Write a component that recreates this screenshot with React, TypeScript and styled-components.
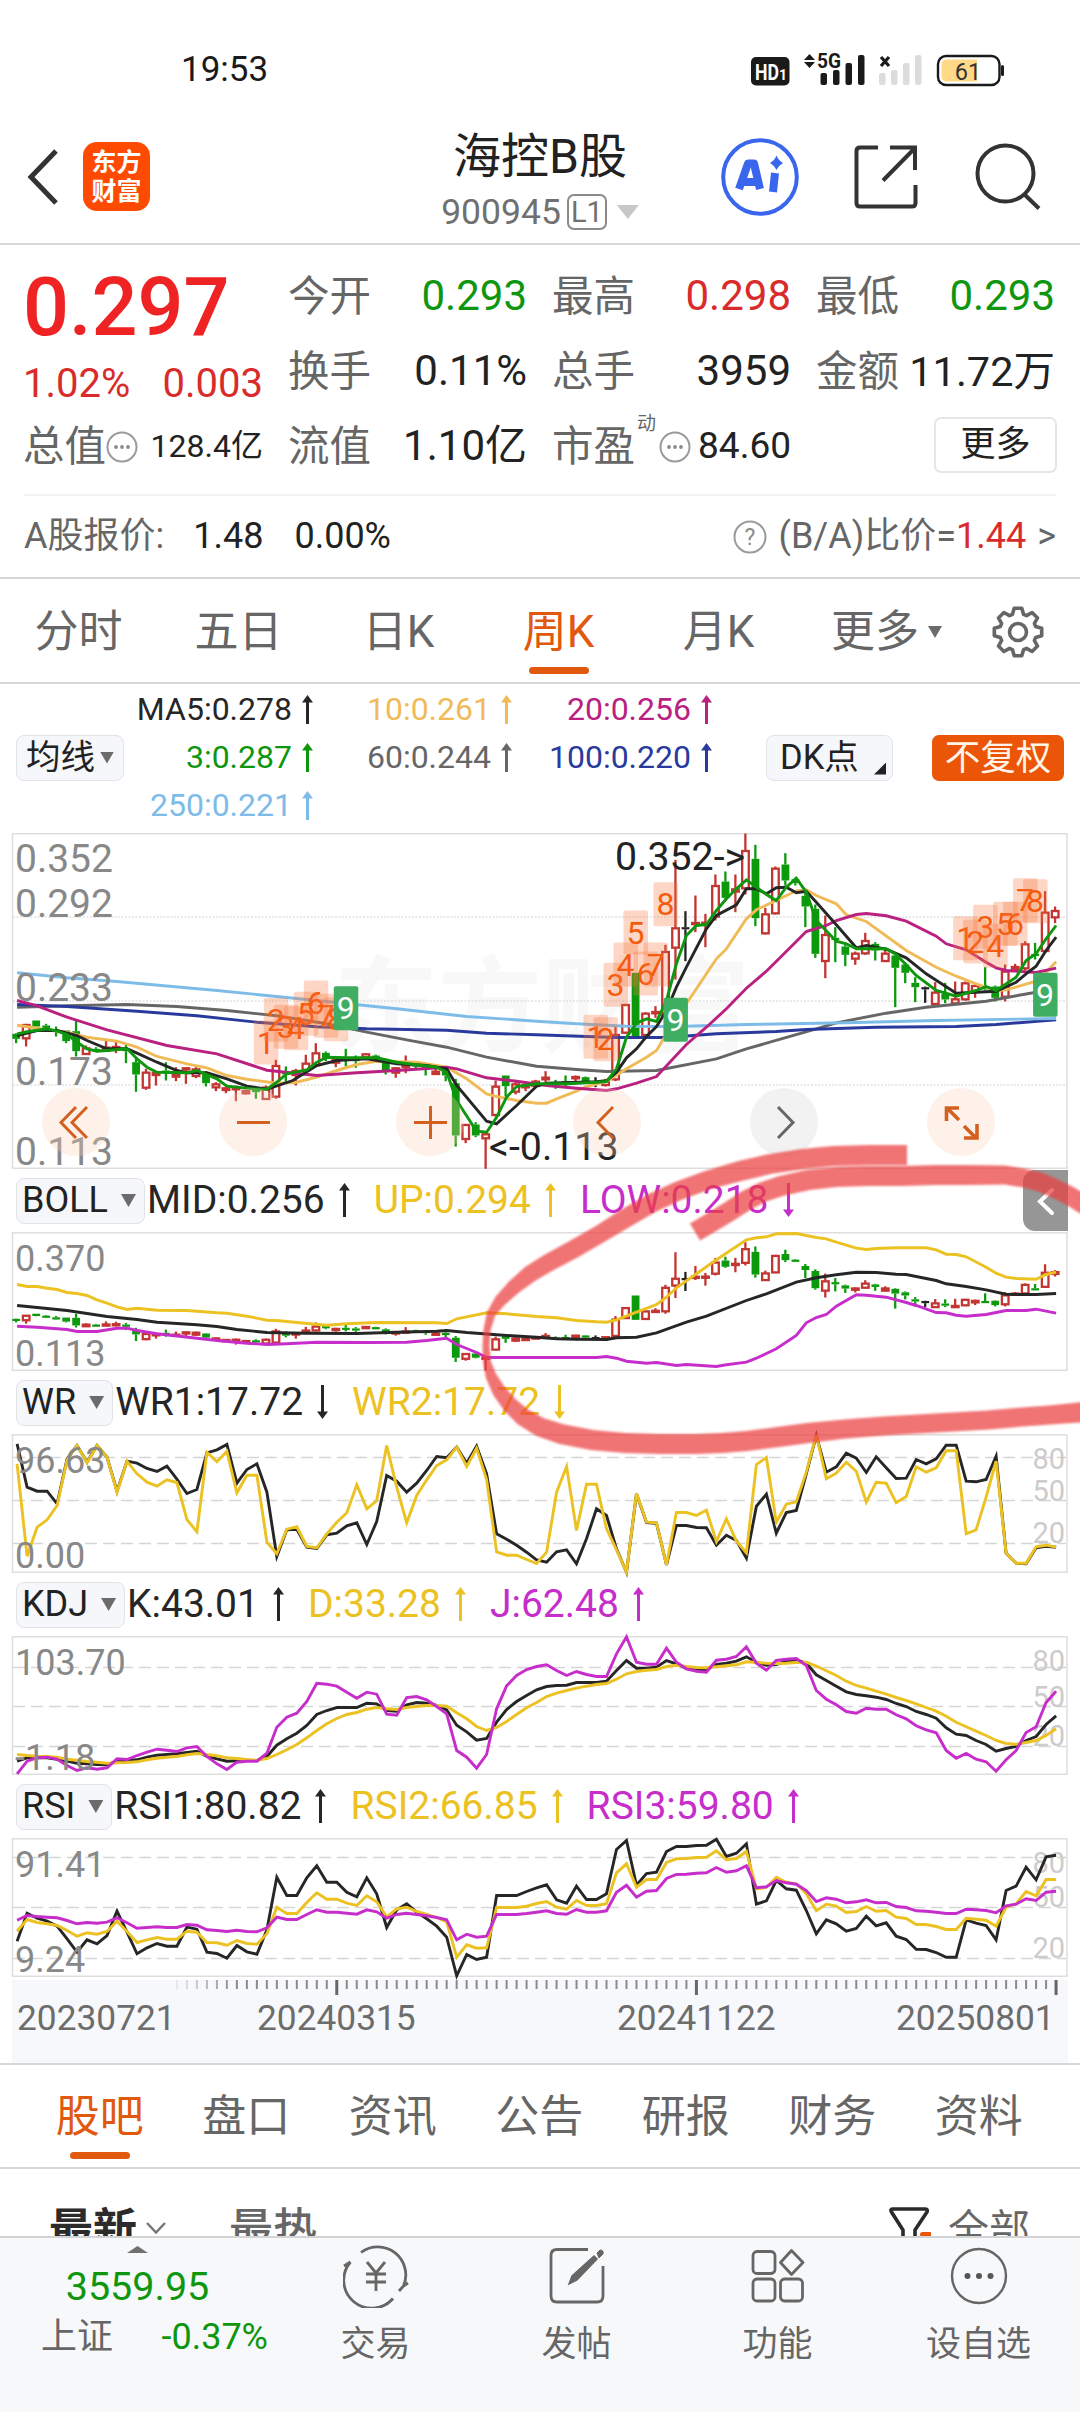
import React from 'react'
import styled, { createGlobalStyle } from 'styled-components'

const GlobalStyle = createGlobalStyle`
  * {
    box-sizing: border-box;
  }
  body {
    margin: 0;
    background: #ffffff;
    font-family: Roboto, 'Noto Sans CJK SC', sans-serif;
    line-height: 1.2;
    color: #222222;
  }
`

const colors = {
  black: '#262626',
  grey: '#666666',
  red: '#d92b2b',
  green: '#0f960f',
  orange: '#e1580f',
  yellow: '#ecc122',
  magenta: '#c62dcb',
  line: '#d6d7d9',
}

const Page = styled.div`
  position: relative;
  width: 1080px;
  height: 2412px;
  overflow: hidden;
  background: #ffffff;
`

const StatusBar = styled.div`
  height: 112px;
  padding: 27px 76px 0 181px;
  display: flex;
  align-items: center;
  justify-content: space-between;
  font-size: 35px;
  color: #1a1a1a;
`

const Header = styled.header`
  height: 133px;
  border-bottom: 2px solid ${colors.line};
  display: grid;
  grid-template-columns: 400px 280px 1fr;
`

const HeaderLeft = styled.div`
  display: flex;
  align-items: center;
  padding: 0 0 2px 26px;
  gap: 24px;
`

const Logo = styled.div`
  width: 67px;
  height: 69px;
  border-radius: 14px;
  background: #ff4a02;
  color: #ffffff;
  font-size: 25px;
  font-weight: 700;
  line-height: 29px;
  padding-top: 6px;
  text-align: center;
`

const HeaderTitle = styled.div`
  display: flex;
  flex-direction: column;
  align-items: center;
  padding-top: 20px;
  gap: 12px;
`

const Name = styled.div`
  font-size: 48px;
  line-height: 50px;
  color: #222222;
`

const Code = styled.div`
  display: flex;
  align-items: center;
  font-size: 35.5px;
  line-height: 36px;
  color: #707070;
`

const Level = styled.span`
  width: 40px;
  height: 36px;
  margin: 0 10px 0 6px;
  border: 2px solid #8a8a8a;
  border-radius: 7px;
  font-size: 29px;
  line-height: 33px;
  text-align: center;
`

const HeaderRight = styled.div`
  display: flex;
  align-items: center;
  padding: 0 0 2px 41px;
`

const AiBadge = styled.div`
  width: 78px;
  height: 78px;
  margin-right: 55px;
`

const ShareBox = styled.div`
  width: 64px;
  height: 64px;
  margin-right: 57px;
`

const Triangle = styled.span<{ $w: number; $h: number; $color?: string; $up?: boolean }>`
  flex: none;
  width: ${(p) => p.$w}px;
  height: ${(p) => p.$h}px;
  background: ${(p) => p.$color || '#6b6b6b'};
  clip-path: ${(p) => (p.$up ? 'polygon(50% 0, 100% 100%, 0 100%)' : 'polygon(0 0, 100% 0, 50% 100%)')};
`

const Quote = styled.section`
  height: 334px;
  padding-top: 14px;
  border-bottom: 2px solid ${colors.line};
`

const QuoteGrid = styled.div`
  display: grid;
  grid-template-columns: 240px 239px 239px 239px;
  grid-template-rows: 75px 75px 75px;
  column-gap: 25px;
  padding-left: 23px;
`

const PriceCell = styled.div`
  grid-row: span 2;
  padding-top: 4px;
  color: ${colors.red};
`

const Price = styled.div`
  font-size: 81px;
  font-weight: 500;
  line-height: 90px;
  color: #ef2323;
`

const Change = styled.div`
  display: flex;
  justify-content: space-between;
  font-size: 40px;
  line-height: 61px;
`

const Cell = styled.div`
  display: flex;
  align-items: center;
  white-space: nowrap;
`

const CellLabel = styled.span`
  font-size: 41.5px;
  color: ${colors.grey};
`

const CellValue = styled.span<{ $color?: string; $size?: number }>`
  margin-left: auto;
  font-size: ${(p) => p.$size || 42}px;
  color: ${(p) => p.$color || '#222222'};
`

const Sup = styled.span`
  align-self: flex-start;
  margin: 4px 3px 0 2px;
  font-size: 19px;
  color: ${colors.grey};
`

const MoreButton = styled.button`
  width: 123px;
  height: 56px;
  margin: -4px -2px 0 auto;
  padding: 0;
  border: 2px solid #e6e6e8;
  border-radius: 7px;
  background: #ffffff;
  font-family: inherit;
  font-size: 35px;
  line-height: 50px;
  color: #222222;
`

const AShareRow = styled.div`
  display: flex;
  align-items: center;
  height: 83px;
  margin: 10px 24px 0;
  border-top: 2px solid #f3f3f3;
  font-size: 36px;
  white-space: pre;
`

const Muted = styled.span`
  color: ${colors.grey};
`

const Num = styled.span<{ $ml?: number }>`
  margin-left: ${(p) => p.$ml || 0}px;
`

const Ratio = styled.div`
  display: flex;
  align-items: center;
  margin-left: auto;
`

const KTabs = styled.nav`
  display: grid;
  grid-template-columns: repeat(5, 160px) 176px 86px;
  height: 105px;
  border-bottom: 2px solid ${colors.line};
`

const Tab = styled.div<{ $active?: boolean }>`
  position: relative;
  display: flex;
  align-items: center;
  justify-content: center;
  gap: 9px;
  padding: 3px 3px 0 0;
  font-size: 44px;
  color: ${(p) => (p.$active ? colors.orange : colors.grey)};
  &::after {
    content: '';
    display: ${(p) => (p.$active ? 'block' : 'none')};
    position: absolute;
    bottom: 8px;
    left: 50%;
    width: 60px;
    height: 7px;
    margin-left: -31px;
    border-radius: 4px;
    background: ${colors.orange};
  }
`

const AverageBar = styled.div`
  display: flex;
  align-items: center;
  height: 149px;
  padding: 0 16px 2px;
`

const Pill = styled.div<{ $w?: number; $gap?: number; $size?: number }>`
  position: relative;
  flex: none;
  display: flex;
  align-items: center;
  width: ${(p) => (p.$w ? `${p.$w}px` : 'auto')};
  height: 46px;
  padding: 0 8px 0 ${(p) => (p.$w ? 9 : 5)}px;
  gap: ${(p) => p.$gap || 5}px;
  border: 1.5px solid #e2e3e7;
  border-radius: 8px;
  background: #f6f7fa;
  font-size: ${(p) => p.$size || 34.5}px;
  white-space: nowrap;
`

const Corner = styled.span`
  position: absolute;
  right: 6px;
  bottom: 5px;
  width: 12px;
  height: 12px;
  background: #222222;
  clip-path: polygon(100% 0, 100% 100%, 0 100%);
`

const AverageGrid = styled.div`
  display: grid;
  grid-template-columns: 185px 199px 200px;
  grid-auto-rows: 48px;
  margin: 0 54px 0 4px;
`

const Average = styled.div<{ $color: string }>`
  display: flex;
  align-items: center;
  justify-content: flex-end;
  gap: 10px;
  font-size: 32px;
  color: ${(p) => p.$color};
`

const Adjust = styled.div`
  width: 132px;
  height: 46px;
  margin-left: 39px;
  border-radius: 7px;
  background: #ea5507;
  color: #fff4e8;
  font-size: 35.5px;
  line-height: 46px;
  text-align: center;
`

const MainChart = styled.div`
  position: relative;
  height: 336px;
`

const Plot = styled.svg`
  display: block;
  overflow: visible;
  font-family: Roboto, 'Noto Sans CJK SC', sans-serif;
`

const Controls = styled.div`
  position: absolute;
  left: 42px;
  top: 255px;
  display: flex;
  gap: 109px;
`

const Control = styled.div<{ $grey?: boolean }>`
  width: 68px;
  height: 68px;
  border-radius: 50%;
  background: ${(p) => (p.$grey ? 'rgba(225, 225, 225, 0.42)' : 'rgba(252, 208, 182, 0.3)')};
`

const IndicatorHead = styled.div`
  position: relative;
  display: flex;
  align-items: center;
  height: 63px;
  padding-left: 16px;
`

const Readout = styled.div<{ $color: string }>`
  display: flex;
  align-items: center;
  gap: 14px;
  margin: 0 22px 0 2px;
  font-size: 39px;
  color: ${(p) => p.$color};
`

const SideHandle = styled.div`
  position: absolute;
  right: 12px;
  top: 1px;
  width: 45px;
  height: 61px;
  border-radius: 12px 0 0 12px;
  background: #969696;
`

const DateAxis = styled.div`
  height: 83px;
  margin: 3px 12px 0;
  background: #f7f8fb;
`

const Dates = styled.div`
  display: grid;
  grid-template-columns: 240px 360px 279px auto;
  padding: 1px 0 0 5px;
  font-size: 35.3px;
  line-height: 42px;
  color: #6c6c6c;
`

const SectionTabs = styled.nav`
  display: grid;
  grid-template-columns: repeat(7, 146.5px);
  height: 106px;
  padding-left: 28px;
  border-top: 2px solid ${colors.line};
  border-bottom: 2px solid ${colors.line};
`

const Feed = styled.div`
  display: flex;
  height: 67px;
  padding: 31px 50px 0 49px;
  overflow: hidden;
  font-size: 44px;
  line-height: 60px;
  color: ${colors.grey};
`

const FeedSort = styled.span<{ $active?: boolean }>`
  font-weight: ${(p) => (p.$active ? 700 : 500)};
  color: ${(p) => (p.$active ? '#2b2b2b' : '#666666')};
`

const FeedFilter = styled.div`
  display: flex;
  margin-left: auto;
  gap: 17px;
  font-size: 41px;
`

const Footer = styled.footer`
  display: grid;
  grid-template-columns: 275px repeat(4, 201px);
  height: 176px;
  border-top: 2px solid #d3d4d6;
  background: #f7f8fa;
`

const IndexCell = styled.div`
  display: flex;
  flex-direction: column;
  align-items: center;
  padding-top: 8px;
  color: ${colors.green};
`

const IndexValue = styled.div`
  margin-top: 14px;
  font-size: 39.5px;
  line-height: 40px;
`

const IndexRow = styled.div`
  display: flex;
  align-self: stretch;
  justify-content: space-between;
  align-items: center;
  margin-top: 9px;
  padding: 0 7px 0 41px;
  font-size: 36px;
  line-height: 42px;
`

const FootItem = styled.div`
  display: flex;
  flex-direction: column;
  align-items: center;
  padding-top: 6px;
  font-size: 35px;
  line-height: 40px;
  color: ${colors.grey};
  svg {
    margin-bottom: 17px;
  }
`

const Marker = styled.svg`
  position: absolute;
  left: 0;
  top: 1120px;
  pointer-events: none;
`

// ---- chart data: one entry per week, vertical units are a third of a pixel ----

const WEEKS = 105
const weekX = (i: number) => 17.1 + i * 9.99

type Point = [number, number]

const full = (s: string): Point[] => s.trim().split(/\s+/).map((v, i) => [i, Number(v)])
const sparse = (s: string): Point[] =>
  s.trim().split(/\s+/).map((pair) => pair.split(':').map(Number) as Point)

const toPoints = (pts: Point[], base: number) =>
  pts.map(([i, v]) => `${weekX(i).toFixed(1)},${((v - base) / 3 + 0.5).toFixed(1)}`).join(' ')

// colour, high, body top, body bottom, low
const candles = `
g 638 640 655 668|r 610 612 655 678|g 600 600 618 620|g 610 615 630 632|g 618 628 632 648|g 630 630 662 668|g 600 632 692 708
r 675 682 702 703|g 680 685 692 695|r 660 680 692 693|r 662 678 688 698|g 672 685 692 728|g 710 725 762 814|r 745 755 803 808
r 755 756 765 795|g 725 750 756 780|r 740 760 770 782|r 740 742 748 790|r 740 745 768 773|g 752 755 788 798|r 785 790 802 812
r 798 802 810 818|r 795 800 808 842|r 808 810 820 822|g 800 808 815 835|r 795 800 837 838|r 718 735 830 835|g 738 755 760 785
r 745 750 765 795|r 703 728 750 755|r 668 697 735 738|g 693 697 712 722|r 710 715 728 740|g 685 710 715 738|g 705 715 722 742
r 698 700 712 712|g 702 705 715 718|g 715 722 750 762|r 740 742 758 772|r 705 735 740 758|g 725 730 738 745|g 730 735 745 765
r 740 752 762 763|g 745 750 765 782|g 775 788 945 978|r 910 912 957 968|g 905 912 945 950|r 935 940 955 1045|r 780 797 885 888
g 765 765 797 828|r 785 790 815 822|r 785 793 802 812|r 778 782 798 800|r 752 770 778 785|g 778 785 792 805|g 765 782 790 798
r 765 768 775 792|g 768 770 785 790|k 770 782 786 800|r 775 780 795 798|r 618 642 778 782|r 550 552 638 640|g 457 457 648 648
r 575 578 645 648|r 557 573 580 592|r 373 393 585 600|r 118 322 383 477|k 272 320 324 422|r 225 306 312 335|r 280 305 312 380
r 162 195 290 300|g 153 183 232 240|r 162 205 215 275|r 39 90 205 222|g 73 115 293 317|r 262 280 340 342|r 138 143 280 282
g 98 132 180 195|g 172 176 188 195|g 210 226 258 320|g 252 265 400 412|r 285 342 423 473|g 320 352 356 425|g 372 378 403 437
r 393 398 416 433|r 337 360 400 403|g 365 370 390 420|r 385 398 423 425|g 400 405 442 560|g 425 432 457 488|g 470 487 500 545
k 498 500 504 547|r 485 515 552 553|g 487 520 537 548|r 483 535 550 551|r 483 487 538 540|r 490 495 515 532|g 440 500 505 510
g 495 498 532 543|r 432 452 530 543|r 430 438 448 452|r 362 370 445 450|g 367 400 405 417|r 212 275 393 395|r 258 270 292 308
`
  .trim()
  .split(/[|\n]/)
  .map((row) => {
    const [kind, ...v] = row.trim().split(' ')
    return { kind, v: v.map(Number) }
  })

const ma: { color: string; pts: Point[] }[] = [
  {
    color: '#666666',
    pts: sparse(
      '0:560 5:556 11:552 16:558 21:570 26:586 31:610 35:635 39:658 43:680 47:710 52:737 56:747 59:753 64:750 70:715 73:685 75:668 80:625 82:607 87:578 91:560 97:542 102:515 104:506',
    ),
  },
  {
    color: '#2a3a9c',
    pts: sparse(
      '0:552 5:558 12:572 18:586 24:605 30:619 35:625 43:629 47:638 52:643 57:648 60:651 65:651 70:640 76:633 79:627 86:620 94:618 98:612 104:598',
    ),
  },
  {
    color: '#7dbce9',
    pts: sparse('0:457 5:472 10:483 20:510 30:540 38:565 45:588 52:602 56:610 61:617 66:618 73:612 83:607 92:600 104:594'),
  },
  {
    color: '#f0bb57',
    pts: sparse(
      '0:614 3:628 5:636 7:650 10:662 12:680 14:708 17:730 19:742 21:765 23:776 26:788 28:785 30:770 32:750 34:732 36:722 40:725 43:740 45:775 47:820 48:828 50:840 52:848 53:848 54:835 56:812 57:798 59:783 61:745 63:710 64:690 64.6:660 67:550 69:460 70:415 71:385 73:295 74:268 76:240 78:211 79:208 80:225 82:250 83:283 85:303 89:390 92:440 94:467 96:490 98:510 99:508 102:482 103:455 104:424',
    ),
  },
  {
    color: '#b9207f',
    pts: sparse(
      '0:540 2:556 5:590 9:628 15:675 20:700 25:749 30:765 34:757 38:750 43:740 44:745 47:772 50:782 53:795 56:803 59:810 60:805 62:788 64:768 67:672 69:620 71:565 73:503 75:452 78:363 79:333 81:315 82:300 84:282 85:279 87:286 89:302 92:347 93:370 95:388 97:425 98:442 99:450 102:456 104:443',
    ),
  },
  {
    color: '#262626',
    pts: sparse(
      '0:645 2:630 4:630 6:645 7:660 9:685 11:685 12:698 14:725 16:750 17:757 19:757 21:775 23:797 25:806 27.6:780 30:735 32:720 35:715 38:730 41:735 43:745 44:795 47:902 48:910 50:855 52:797 53:788 58:784 59:781 60:755 61:712 62:685 63:648 64:618 65:570 66:500 67:440 69:325 70:285 72:253 73:205 74:205 75:220 76:202 77:200 78:217 79:212 80:245 82:313 84:382 85:375 87:386 89:412 91:460 94:518 96:515 98:512 100:485 101:460 102:437 103:390 104:350',
    ),
  },
  {
    color: '#0f960f',
    pts: sparse(
      '0:640 1:634 3:625 4:632 5:642 6:665 7:685 8:692 9:690 11:685 12:715 13:740 14:755 17:757 18:750 20:775 21:797 24:806 25:806 26:785 27:760 29:748 30:725 31:710 33:712 36:712 38:725 42:740 43:755 44:840 46:932 47:935 48:890 49:830 50:798 52:790 55:790 58:785 59:783 60:745 61:650 62:608 63:595 64:603 65:540 66:430 67:345 68:315 69:312 70:270 71:235 72:205 73:178 75:222 76:240 77:200 78:173 79:215 80:300 82:362 83:370 84:385 87:385 88:402 90:465 92:510 94:527 96:510 97:498 98:510 100:470 101:420 102:400 103:355 104:315',
    ),
  },
]

const boll = [
  {
    color: colors.yellow,
    pts: sparse(
      '0:342 1:348 2:348 3:353 4:357 5:366 6:369 7:375 8:388 9:398 10:409 11:417 12:413 14:419 17:420 20:427 21:428 23:437 25:449 26:450 28:456 31:464 33:460 36:456 42:457 43:459 44:445 47:427 49:430 52:438 54:442 56:450 58:454 59:455 60:448 62:425 64:402 65:380 66:352 68:310 70:268 73:208 74:202 75:199 76:190 78:189 80:201 81:205 82:215 84:233 85:237 86:234 88:232 91:232 92:238 93:251 94:252 95:259 97:290 98:308 99:320 100:324 102:326 103:312 104:305',
    ),
  },
  {
    color: colors.black,
    pts: sparse(
      '0:405 5:420 9:438 12:447 14:455 18:463 20:468 22:477 25:486 29:488 34:489 38:485 42:482 43:480 45:486 48:493 52:500 54:505 56:506 59:507 60:502 62:500 64:487 67:455 69:437 73:390 75:370 78:335 80:322 82:313 84:305 86:306 88:311 89:312 92:330 93:340 95:348 97:358 99:371 100:372 102:372 104:369',
    ),
  },
  {
    color: colors.magenta,
    pts: sparse(
      '0:467 2:470 5:477 6:483 8:483 10:473 11:473 12:480 14:490 18:503 20:510 23:518 25:522 27:520 30:515 35:516 39:515 41:510 43:503 44:522 46:546 47:560 48:561 58:561 59:558 60:563 61:572 63:578 64:576 66:585 67:582 70:588 71:583 73:575 74:563 76:535 78:495 79:457 80:441 81:432 82:407 84:373 85:374 87:380 89:396 90:405 92:426 93:427 94:434 95:437 97:432 99:420 101:420 102:416 104:428',
    ),
  },
]

const wr = [
  {
    color: colors.black,
    pts: full(
      '70 200 212 212 250 115 75 125 75 110 212 122 128 144 153 137 176 219 207 97 88 72 188 147 130 215 408 328 326 380 384 343 338 316 307 372 303 165 182 215 188 150 108 112 80 128 77 160 340 356 374 395 418 425 394 388 430 355 265 285 385 455 220 306 308 433 315 315 321 322 374 344 360 413 257 221 338 276 270 160 45 155 139 98 113 156 109 142 174 173 117 130 115 74 74 182 184 177 107 398 428 430 382 377 380',
    ),
  },
  {
    color: colors.yellow,
    pts: full(
      '130 407 320 298 255 118 75 127 75 110 215 122 160 185 197 178 186 297 334 95 124 93 217 164 164 365 400 326 319 378 382 340 305 277 193 265 241 75 200 307 225 178 135 118 80 138 83 177 394 404 404 417 429 395 215 138 330 191 191 325 388 455 218 305 307 433 276 276 285 269 363 295 362 397 132 111 305 251 244 155 43 175 158 125 152 245 185 188 247 228 139 155 142 91 91 340 328 230 122 398 428 428 379 374 380',
    ),
  },
]

const kdj = [
  {
    color: colors.black,
    pts: full(
      '1022 1012 1012 1012 1016 1022 1028 1030 1032 1033 1022 1020 1018 1010 1004 1002 1000 996 992 1008 1015 1022 1021 1020 1020 1008 974 955 938 915 882 870 861 861 861 848 850 870 872 853 846 848 855 868 914 934 959 954 905 867 843 825 808 798 795 794 786 786 786 782 750 720 743 743 740 720 730 744 747 748 732 728 722 709 725 734 732 722 718 728 763 780 797 814 822 826 830 837 849 858 873 882 893 922 941 945 960 972 992 984 978 960 948 912 886',
    ),
  },
  {
    color: colors.yellow,
    pts: full(
      '1002 1005 1007 1008 1010 1016 1019 1023 1025 1028 1027 1026 1024 1018 1013 1010 1008 1003 999 1002 1006 1012 1014 1017 1019 1014 1002 988 972 952 930 910 894 882 876 866 861 865 867 861 858 855 855 857 877 895 918 930 921 903 882 862 846 828 818 810 803 797 792 789 776 760 753 749 747 738 734 738 741 742 739 736 733 724 726 728 729 728 726 725 737 751 765 782 795 803 812 821 831 840 850 861 872 887 905 919 932 945 960 969 971 966 960 945 925',
    ),
  },
  {
    color: colors.magenta,
    pts: full(
      '1060 1022 1012 1010 1016 1035 1050 1042 1046 1042 1015 1017 1005 995 986 989 993 982 978 1008 1030 1047 1025 1022 1022 998 920 890 878 843 788 791 797 815 833 815 821 881 884 831 828 838 858 880 990 1010 1043 1002 865 796 765 747 738 733 750 765 753 762 768 768 700 649 725 731 731 683 725 745 752 755 719 716 708 679 728 749 720 716 714 735 810 836 853 873 878 863 866 866 883 895 916 928 937 990 1013 999 1016 1024 1052 1018 990 936 919 846 812',
    ),
  },
]

const rsi = [
  {
    color: colors.black,
    pts: full(
      '482 398 413 422 437 475 515 478 490 465 392 455 520 502 489 497 497 440 446 515 519 533 495 514 521 448 290 345 345 292 256 305 305 335 349 292 340 441 388 370 395 415 437 470 586 522 537 530 345 345 345 333 322 313 358 368 317 357 357 340 207 180 314 279 275 213 198 198 195 194 176 228 218 190 371 361 300 325 329 390 460 418 430 452 444 407 436 427 467 477 506 507 516 530 530 418 428 435 478 330 317 260 298 229 224',
    ),
  },
  {
    color: colors.yellow,
    pts: full(
      '452 417 426 430 435 450 467 457 461 453 422 453 486 478 471 476 476 452 455 486 487 494 480 489 491 460 380 399 399 366 337 356 356 368 375 346 364 409 385 380 393 402 411 424 530 493 503 502 381 381 381 377 369 363 380 386 360 375 375 370 277 250 320 297 297 246 235 234 231 230 211 238 234 213 325 321 290 305 310 340 391 371 377 396 393 378 392 390 410 414 432 432 438 447 447 413 416 419 437 380 370 333 346 297 297',
    ),
  },
  {
    color: colors.magenta,
    pts: full(
      '419 405 408 410 412 420 430 426 428 425 412 427 443 441 439 441 441 432 434 448 450 453 449 453 454 442 410 417 417 402 388 395 395 398 401 388 394 413 402 398 402 406 411 418 478 461 470 467 402 402 402 399 395 391 399 401 387 395 395 391 335 314 350 332 330 294 282 281 278 277 261 275 271 256 322 319 300 307 311 330 363 352 356 367 364 358 367 366 378 381 391 392 395 399 399 386 388 390 397 376 371 355 360 335 332',
    ),
  },
]

// runs of nine: first week and the top edge of each box
const sequences = [
  { start: 25, tops: [600, 532, 553, 557, 514, 480, 520, 530, 497] },
  { start: 58, tops: [583, 590, 427, 366, 270, 393, 366, 185, 532] },
  { start: 95, tops: [287, 297, 253, 310, 244, 244, 173, 176, 457] },
]

const candleColor: Record<string, string> = { r: '#c23531', g: '#0c9a0c', k: '#222222' }

const mainY = (v: number) => (v - 39) / 3 + 0.5
const bollY = (v: number) => {
  const price = 0.352 - ((v - 39) / 1006) * 0.239
  return ((0.37 - price) / 0.257) * 138 + 0.5
}

const Candles: React.FC<{ y: (v: number) => number }> = ({ y }) => (
  <g>
    {candles.map(({ kind, v }, i) => {
      const [high, top, bottom, low] = v.map(y)
      const x = weekX(i) - 1
      const color = candleColor[kind]
      const h = Math.max(bottom - top, 2.2)
      return (
        <g key={i} stroke={color} strokeWidth={2.3}>
          <line x1={x} x2={x} y1={high} y2={top} />
          <line x1={x} x2={x} y1={top + h} y2={Math.max(low, top + h)} />
          {kind === 'r' ? (
            <rect x={x - 3.2} y={top + 0.5} width={6.6} height={Math.max(h - 1, 1)} fill="#ffffff" />
          ) : (
            <rect x={x - 3.8} y={top} width={7.8} height={h} fill={color} stroke="none" />
          )}
        </g>
      )
    })}
  </g>
)

const Lines: React.FC<{ series: { color: string; pts: Point[] }[]; base: number; width?: number }> = ({
  series,
  base,
  width = 2.9,
}) => (
  <>
    {series.map((s, i) => (
      <polyline key={i} points={toPoints(s.pts, base)} fill="none" stroke={s.color} strokeWidth={width} />
    ))}
  </>
)

const Frame: React.FC<{ h: number }> = ({ h }) => (
  <rect x={12.5} y={0.75} width={1054.5} height={h} fill="none" stroke="#dedede" strokeWidth={1.5} />
)

const Arrow: React.FC<{ down?: boolean; h?: number }> = ({ down, h = 34 }) => (
  <svg width={11} height={h} viewBox={`0 0 11 ${h}`}>
    <g transform={down ? `rotate(180 5.5 ${h / 2})` : undefined}>
      <path d="M5.5 0 L11 7.5 H0 Z" fill="currentColor" />
      <path d={`M5.5 5 V${h}`} stroke="currentColor" strokeWidth={3} />
    </g>
  </svg>
)

interface PanelProps {
  name: string
  readouts: { text: string; color: string; down?: boolean }[]
  series: { color: string; pts: Point[] }[]
  base: number
  labels: [string, string]
  guides?: { y: number; text: string; ty: number }[]
  withCandles?: boolean
  children?: React.ReactNode
}

const Panel: React.FC<PanelProps> = ({ name, readouts, series, base, labels, guides = [], withCandles, children }) => (
  <>
    <IndicatorHead>
      <Pill $gap={13} $size={36}>
        {name}
        <Triangle $w={15} $h={13} />
      </Pill>
      {readouts.map((r) => (
        <Readout key={r.text} $color={r.color}>
          {r.text}
          <Arrow down={r.down} />
        </Readout>
      ))}
      {children}
    </IndicatorHead>
    <Plot width={1080} height={139}>
      <Frame h={137.5} />
      {guides.map((g) => (
        <g key={g.text}>
          <line x1={13} x2={1066} y1={g.y} y2={g.y} stroke="#d6d6d6" strokeWidth={1.4} strokeDasharray="12 6" />
          <text x={1065} y={g.ty} fontSize={29} textAnchor="end" fill="#cccccc">
            {g.text}
          </text>
        </g>
      ))}
      {withCandles && <Candles y={bollY} />}
      <Lines series={series} base={base} />
      <text x={15} y={39} fontSize={36} fill="#888888">
        {labels[0]}
      </text>
      <text x={15} y={134} fontSize={36} fill="#888888">
        {labels[1]}
      </text>
    </Plot>
  </>
)

// stroke of varying width as a closed outline: x, y, width
const brush = (pts: number[][]) => {
  const left: string[] = []
  const right: string[] = []
  pts.forEach(([x, y, w], i) => {
    const a = pts[Math.max(0, i - 1)]
    const b = pts[Math.min(pts.length - 1, i + 1)]
    const len = Math.hypot(b[0] - a[0], b[1] - a[1])
    const nx = (-(b[1] - a[1]) / len) * (w / 2)
    const ny = ((b[0] - a[0]) / len) * (w / 2)
    left.push(`${(x + nx).toFixed(1)} ${(y + ny).toFixed(1)}`)
    right.unshift(`${(x - nx).toFixed(1)} ${(y - ny).toFixed(1)}`)
  })
  return `M${left.join('L')}L${right.join('L')}Z`
}

const outerLoop = brush([
  [907, 1155, 20], [870, 1155, 20], [833, 1156, 20], [803, 1159, 20], [770, 1164, 20], [740, 1171, 20],
  [708, 1180, 19], [678, 1191, 19], [652, 1203, 19], [626, 1218, 19], [600, 1234, 18], [574, 1249, 18],
  [548, 1263, 18], [530, 1274, 17], [514, 1287, 15], [500, 1301, 12], [491, 1314, 9], [487, 1330, 7],
  [486, 1346, 7], [487, 1362, 8], [491, 1376, 11], [499, 1391, 14], [510, 1405, 16], [523, 1417, 18],
  [540, 1427, 19], [561, 1434, 20], [592, 1440, 20], [625, 1443, 20], [660, 1444, 20], [695, 1444, 20],
  [722, 1443, 20], [747, 1441, 20], [778, 1437, 20], [808, 1433, 20], [845, 1429, 19], [884, 1426, 19],
  [918, 1424, 19], [953, 1422, 19], [988, 1420, 19], [1022, 1417, 19], [1050, 1415, 19], [1085, 1412, 20],
])

const innerLoop = brush([
  [695, 1232, 20], [712, 1222, 20], [730, 1211, 20], [747, 1200, 20], [763, 1192, 20], [781, 1186, 20],
  [808, 1180, 20], [836, 1177, 20], [868, 1176, 20], [901, 1176, 20], [935, 1175, 20], [970, 1175, 20],
  [1005, 1175, 19], [1024, 1178, 19], [1040, 1182, 19], [1056, 1189, 19], [1070, 1196, 19], [1086, 1206, 19],
])

const averages = [
  ['MA5:0.278', '#262626'],
  ['10:0.261', '#f0bb57'],
  ['20:0.256', '#b9207f'],
  ['3:0.287', '#0f960f'],
  ['60:0.244', '#666666'],
  ['100:0.220', '#2a3a9c'],
  ['250:0.221', '#7dbce9'],
]

const Info: React.FC<{ r: number; mark?: string }> = ({ r, mark }) => (
  <svg width={2 * r + 2} height={2 * r + 2} viewBox={`${-r - 1} ${-r - 1} ${2 * r + 2} ${2 * r + 2}`}>
    <circle r={r - 0.5} fill="none" stroke="#9a9a9a" strokeWidth={2} />
    {mark ? (
      <text y={8} fontSize={23} textAnchor="middle" fill="#8c8c8c">
        {mark}
      </text>
    ) : (
      [-6, 0, 6].map((x) => <circle key={x} cx={x} r={1.9} fill="#8a8a8a" />)
    )}
  </svg>
)

const StatusIcons = () => (
  <svg width={254} height={36} viewBox="750 51 254 36" fontFamily="Roboto, sans-serif" overflow="visible">
    <rect x={751} y={56} width={38.5} height={28.5} rx={5} fill="#1a1a1a" />
    <text x={755} y={78.5} fontSize={22} fontWeight={700} fill="#ffffff" textLength={24} lengthAdjust="spacingAndGlyphs">
      HD
    </text>
    <text x={779} y={79} fontSize={14} fontWeight={700} fill="#ffffff">
      1
    </text>
    <path d="M809.5 53 L815 59 H804 Z M809.5 67 L815 61 H804 Z" fill="#1a1a1a" />
    <text x={817} y={66.5} fontSize={19.5} fontWeight={700} fill="#1a1a1a" textLength={24} lengthAdjust="spacingAndGlyphs">
      5G
    </text>
    {[72, 69, 62, 54].map((y, i) => (
      <g key={y}>
        <rect x={820.5 + i * 12.5} y={y} width={6.5} height={84 - y} rx={2} fill="#1a1a1a" />
        <rect x={879 + i * 12} y={y} width={6.5} height={84 - y} rx={2} fill="#dcdcdc" />
      </g>
    ))}
    <path d="M881 56 L889 65 M889 56 L881 65" stroke="#1a1a1a" strokeWidth={3.2} />
    <rect x={938} y={55} width={61.5} height={29} rx={8} fill="#ffffff" stroke="#1a1a1a" strokeWidth={2.4} />
    <path d="M947 58.5 H977 V80.5 H947 Q941.5 80.5 941.5 75 V64 Q941.5 58.5 947 58.5 Z" fill="#ffd987" />
    <rect x={1001} y={64} width={3} height={11} rx={1.5} fill="#1a1a1a" />
    <text x={968} y={78.5} fontSize={23.5} textAnchor="middle" fill="#333333">
      61
    </text>
  </svg>
)

const gear = (() => {
  const pts: string[] = []
  for (let k = 0; k < 8; k++) {
    const a = (k * Math.PI) / 4 - Math.PI / 2
    const add = (r: number, d: number) => pts.push(`${(r * Math.cos(a + d)).toFixed(1)} ${(r * Math.sin(a + d)).toFixed(1)}`)
    add(18.5, -0.31)
    add(24, -0.16)
    add(24, 0.16)
    add(18.5, 0.31)
  }
  return `M${pts.join('L')}Z`
})()

const App: React.FC = () => (
  <>
    <GlobalStyle />
    <Page>
      <StatusBar>
        <span>19:53</span>
        <StatusIcons />
      </StatusBar>

      <Header>
        <HeaderLeft>
          <svg width={33} height={56} viewBox="0 0 33 56" fill="none" stroke="#333333" strokeWidth={5}>
            <path d="M30 2 L5 28 L30 54" />
          </svg>
          <Logo>
            东方
            <br />
            财富
          </Logo>
        </HeaderLeft>
        <HeaderTitle>
          <Name>海控B股</Name>
          <Code>
            900945
            <Level>L1</Level>
            <Triangle $w={22} $h={14} $color="#c8c8c8" />
          </Code>
        </HeaderTitle>
        <HeaderRight>
          <AiBadge>
            <svg width={78} height={78} viewBox="0 0 78 78">
              <circle cx={39} cy={39} r={36.8} fill="none" stroke="#3a66ee" strokeWidth={4} />
              <path
                d="M18 51 L27 25.5 H33 L39 51 M22 44 H37 M54 35 L52 54"
                fill="none"
                stroke="#3a66ee"
                strokeWidth={8}
                strokeLinejoin="round"
              />
              <path d="M55.5 17.5 Q57.5 22.5 62 25 Q57.5 27.5 55.5 32 Q53.5 27.5 49 25 Q53.5 22.5 55.5 17.5 Z" fill="#3a66ee" />
            </svg>
          </AiBadge>
          <ShareBox>
            <svg width={64} height={64} viewBox="0 0 64 64" fill="none" stroke="#333333" strokeWidth={4}>
              <path d="M24 2.5 H6 Q2.5 2.5 2.5 6 V58 Q2.5 61.5 6 61.5 H58 Q61.5 61.5 61.5 58 V40" />
              <path d="M36 2.5 H61 V25 M61 3 L29 35.5" />
            </svg>
          </ShareBox>
          <svg width={66} height={68} viewBox="0 0 66 68" fill="none" stroke="#333333" strokeWidth={4}>
            <circle cx={30.5} cy={30.5} r={28} />
            <path d="M49 51 L64 65.5" />
          </svg>
        </HeaderRight>
      </Header>

      <Quote>
        <QuoteGrid>
          <PriceCell>
            <Price>0.297</Price>
            <Change>
              <span>1.02%</span>
              <span>0.003</span>
            </Change>
          </PriceCell>
          <Cell>
            <CellLabel>今开</CellLabel>
            <CellValue $color={colors.green}>0.293</CellValue>
          </Cell>
          <Cell>
            <CellLabel>最高</CellLabel>
            <CellValue $color={colors.red}>0.298</CellValue>
          </Cell>
          <Cell>
            <CellLabel>最低</CellLabel>
            <CellValue $color={colors.green}>0.293</CellValue>
          </Cell>
          <Cell>
            <CellLabel>换手</CellLabel>
            <CellValue>0.11%</CellValue>
          </Cell>
          <Cell>
            <CellLabel>总手</CellLabel>
            <CellValue>3959</CellValue>
          </Cell>
          <Cell>
            <CellLabel>金额</CellLabel>
            <CellValue $size={41.5}>11.72万</CellValue>
          </Cell>
          <Cell>
            <CellLabel>总值</CellLabel>
            <Info r={15} />
            <CellValue $size={32}>128.4亿</CellValue>
          </Cell>
          <Cell>
            <CellLabel>流值</CellLabel>
            <CellValue>1.10亿</CellValue>
          </Cell>
          <Cell>
            <CellLabel>市盈</CellLabel>
            <Sup>动</Sup>
            <Info r={15} />
            <CellValue $size={37}>84.60</CellValue>
          </Cell>
          <Cell>
            <MoreButton>更多</MoreButton>
          </Cell>
        </QuoteGrid>
        <AShareRow>
          <Muted>A股报价:</Muted>
          <Num $ml={29}>1.48</Num>
          <Num $ml={31}>0.00%</Num>
          <Ratio>
            <Info r={16} mark="?" />
            <Num $ml={12}>
              <Muted>(B/A)比价=</Muted>
            </Num>
            <CellValue $color={colors.red} $size={36}>
              1.44
            </CellValue>
            <Num $ml={11}>
              <Muted>&gt;</Muted>
            </Num>
          </Ratio>
        </AShareRow>
      </Quote>

      <KTabs>
        <Tab>分时</Tab>
        <Tab>五日</Tab>
        <Tab>日K</Tab>
        <Tab $active>周K</Tab>
        <Tab>月K</Tab>
        <Tab>
          更多
          <Triangle $w={14} $h={12} />
        </Tab>
        <Tab>
          <svg width={54} height={54} viewBox="-27 -27 54 54" fill="none" stroke="#666666" strokeWidth={3.6}>
            <path d={gear} strokeLinejoin="round" />
            <circle r={8.5} />
          </svg>
        </Tab>
      </KTabs>

      <AverageBar>
        <Pill $w={108}>
          均线
          <Triangle $w={14} $h={12} />
        </Pill>
        <AverageGrid>
          {averages.map(([text, color]) => (
            <Average key={text} $color={color}>
              {text}
              <Arrow h={29} />
            </Average>
          ))}
        </AverageGrid>
        <Pill $w={127}>
          <Num $ml={4}>DK点</Num>
          <Corner />
        </Pill>
        <Adjust>不复权</Adjust>
      </AverageBar>

      <MainChart>
        <Plot width={1080} height={336}>
          <text x={334} y={211} fontSize={104} fontWeight={700} fill="#f8f8f8">
            东方财富
          </text>
          <Frame h={334.5} />
          {[84, 168, 252].map((y) => (
            <line key={y} x1={13} x2={1066} y1={y} y2={y} stroke="#d2d2d2" strokeWidth={1} strokeDasharray="2 1.5" />
          ))}
          <Candles y={mainY} />
          <Lines series={ma} base={39} />
          {sequences.map(({ start, tops }) =>
            tops.map((top, n) => {
              const x = weekX(start + n) - 1
              const y = mainY(top)
              const last = n === 8
              return (
                <g key={start + n}>
                  <rect
                    x={x - 12}
                    y={y}
                    width={24.5}
                    height={44}
                    rx={2}
                    fill={last ? '#3fae62' : '#fa7840'}
                    fillOpacity={last ? 1 : 0.3}
                  />
                  <text
                    x={x}
                    y={y + 33}
                    fontSize={32}
                    textAnchor="middle"
                    fill={last ? '#ffffff' : '#f65b0d'}
                  >
                    {n + 1}
                  </text>
                </g>
              )
            }),
          )}
          <g fontSize={39} fill="#888888">
            <text x={15} y={38.5}>0.352</text>
            <text x={15} y={84}>0.292</text>
            <text x={15} y={168}>0.233</text>
            <text x={15} y={252}>0.173</text>
            <text x={15} y={332}>0.113</text>
          </g>
          <g fontSize={39.3} fill="#222222">
            <text x={615} y={36.5}>0.352-&gt;</text>
            <text x={489} y={327}>&lt;-0.113</text>
          </g>
        </Plot>
        <Controls>
          <Control>
            <svg width={68} height={68} fill="none" stroke="#d4601f" strokeWidth={3}>
              <path d="M34 19 L19 34.5 L34 50 M45 19 L30 34.5 L45 50" />
            </svg>
          </Control>
          <Control>
            <svg width={68} height={68} stroke="#d4601f" strokeWidth={3}>
              <path d="M18 34.5 H51" />
            </svg>
          </Control>
          <Control>
            <svg width={68} height={68} stroke="#d4601f" strokeWidth={3}>
              <path d="M18 34.5 H51 M34.5 18 V51" />
            </svg>
          </Control>
          <Control>
            <svg width={68} height={68} fill="none" stroke="#d4601f" strokeWidth={3}>
              <path d="M40 19 L25 34.5 L40 50" />
            </svg>
          </Control>
          <Control $grey>
            <svg width={68} height={68} fill="none" stroke="#666666" strokeWidth={3}>
              <path d="M28 19 L43 34.5 L28 50" />
            </svg>
          </Control>
          <Control>
            <svg width={68} height={68} fill="none" stroke="#d4601f" strokeWidth={3.6}>
              <path d="M32 20 H19.5 V33 M20 20 L32 32 M37 38 L49 50 M50 36 V50 H37" />
            </svg>
          </Control>
        </Controls>
      </MainChart>

      <Panel
        name="BOLL"
        readouts={[
          { text: 'MID:0.256', color: colors.black },
          { text: 'UP:0.294', color: colors.yellow },
          { text: 'LOW:0.218', color: colors.magenta, down: true },
        ]}
        series={boll}
        base={186}
        labels={['0.370', '0.113']}
        withCandles
      >
        <SideHandle>
          <svg width={45} height={61} fill="none" stroke="#ffffff" strokeWidth={4} strokeLinecap="round">
            <path d="M29 20 L17 31.5 L29 43" />
          </svg>
        </SideHandle>
      </Panel>
      <Panel
        name="WR"
        readouts={[
          { text: 'WR1:17.72', color: colors.black, down: true },
          { text: 'WR2:17.72', color: colors.yellow, down: true },
        ]}
        series={wr}
        base={42}
        labels={['96.63', '0.00']}
        guides={[
          { y: 23.5, text: '80', ty: 35 },
          { y: 66.5, text: '50', ty: 67 },
          { y: 109.5, text: '20', ty: 109 },
        ]}
      />
      <Panel
        name="KDJ"
        readouts={[
          { text: 'K:43.01', color: colors.black },
          { text: 'D:33.28', color: colors.yellow },
          { text: 'J:62.48', color: colors.magenta },
        ]}
        series={kdj}
        base={648}
        labels={['103.70', '-1.18']}
        guides={[
          { y: 31.5, text: '80', ty: 35 },
          { y: 70.5, text: '50', ty: 71 },
          { y: 110.5, text: '20', ty: 110 },
        ]}
      />
      <Panel
        name="RSI"
        readouts={[
          { text: 'RSI1:80.82', color: colors.black },
          { text: 'RSI2:66.85', color: colors.yellow },
          { text: 'RSI3:59.80', color: colors.magenta },
        ]}
        series={rsi}
        base={174}
        labels={['91.41', '9.24']}
        guides={[
          { y: 19.5, text: '80', ty: 35 },
          { y: 69.5, text: '50', ty: 69 },
          { y: 120.5, text: '20', ty: 120 },
        ]}
      />

      <DateAxis>
        <Plot width={1056} height={16}>
          {Array.from({ length: WEEKS }, (_, i) => i)
            .filter((i) => i >= 16)
            .map((i) => {
              const major = i === 32 || i === 68 || i === 104
              return (
                <line
                  key={i}
                  x1={weekX(i) - 12}
                  x2={weekX(i) - 12}
                  y1={0}
                  y2={major ? 15 : 9}
                  stroke={major ? '#666666' : '#8a8a8a'}
                  strokeWidth={major ? 3 : 2}
                  opacity={Math.max(0, Math.min(1, (i - 15) / 7))}
                />
              )
            })}
        </Plot>
        <Dates>
          <span>20230721</span>
          <span>20240315</span>
          <span>20241122</span>
          <span>20250801</span>
        </Dates>
      </DateAxis>

      <SectionTabs>
        {['股吧', '盘口', '资讯', '公告', '研报', '财务', '资料'].map((t, i) => (
          <Tab key={t} $active={i === 0}>
            {t}
          </Tab>
        ))}
      </SectionTabs>

      <Feed>
        <FeedSort $active>最新</FeedSort>
        <svg width={92} height={40} fill="none" stroke="#777777" strokeWidth={2.5}>
          <path d="M10 23 L19 32.5 L28 23" />
        </svg>
        <FeedSort>最热</FeedSort>
        <FeedFilter>
          <svg width={42} height={50} viewBox="0 0 42 50">
            <path
              d="M3.5 9 H36.5 Q39 9 38 12 L26 30 V50 M3.5 9 Q1 9 2.5 12 L14 30 V50"
              fill="none"
              stroke="#2b2b2b"
              strokeWidth={3.6}
            />
            <rect x={31} y={32} width={12} height={5} rx={2.5} fill="#ea5507" />
          </svg>
          全部
        </FeedFilter>
      </Feed>

      <Footer>
        <IndexCell>
          <Triangle $w={21} $h={7} $color="#707070" $up />
          <IndexValue>3559.95</IndexValue>
          <IndexRow>
            <Muted>上证</Muted>
            <span>-0.37%</span>
          </IndexRow>
        </IndexCell>
        <FootItem>
          <svg width={66} height={64} viewBox="-33 -32 66 64" fill="none" stroke="#666666" strokeWidth={2.8}>
            <path d="M-15 -23.5 A28 28 0 0 1 27.5 10 M17 22.5 A28 28 0 0 1 -25.5 -14 M-25.5 -14 L-32 -10 M27.5 10 L32 7 M27.5 10 L23 15" />
            <path d="M-9 -14 L0 -3 L9 -14 M0 -3 V15 M-10 -2 H10 M-10 6 H10" />
          </svg>
          交易
        </FootItem>
        <FootItem>
          <svg width={66} height={64} viewBox="-33 -32 66 64" fill="none" stroke="#666666" strokeWidth={2.8}>
            <path d="M11 -26.5 H-20 Q-26 -26.5 -26 -20.5 V20 Q-26 26 -20 26 H20 Q26 26 26 20 V-10" />
            <path d="M-8 8 L-5 0 L17 -20 L20 -17 L0 4 Z" fill="#666666" strokeWidth={1.5} />
            <path d="M20 -23 L23 -26 Q27 -26 26 -22 L22 -18 Z" fill="#666666" strokeWidth={1} />
          </svg>
          发帖
        </FootItem>
        <FootItem>
          <svg width={66} height={64} viewBox="-33 -32 66 64" fill="none" stroke="#666666" strokeWidth={2.8}>
            <rect x={-25} y={-24.5} width={22} height={22} rx={4} />
            <rect x={-25} y={3} width={22} height={22} rx={4} />
            <rect x={2.5} y={3} width={22} height={22} rx={4} />
            <path d="M13.5 -25.5 L25 -13.5 L13.5 -1.5 L2.5 -13.5 Z" strokeLinejoin="round" />
          </svg>
          功能
        </FootItem>
        <FootItem>
          <svg width={66} height={64} viewBox="-33 -32 66 64" fill="none" stroke="#666666" strokeWidth={2.4}>
            <circle r={27} />
            <g fill="#555555" stroke="none">
              <circle cx={-11.5} r={3} />
              <circle r={3} />
              <circle cx={11.5} r={3} />
            </g>
          </svg>
          设自选
        </FootItem>
      </Footer>

      <Marker width={1080} height={350} viewBox="0 1120 1080 350">
        <defs>
          <filter id="soft" x="-5%" y="-5%" width="110%" height="110%">
            <feGaussianBlur stdDeviation="0.9" />
          </filter>
        </defs>
        <g fill="#ec3e40" fillOpacity={0.72} filter="url(#soft)">
          <path d={outerLoop} />
          <path d={innerLoop} />
        </g>
      </Marker>
    </Page>
  </>
)

export default App
